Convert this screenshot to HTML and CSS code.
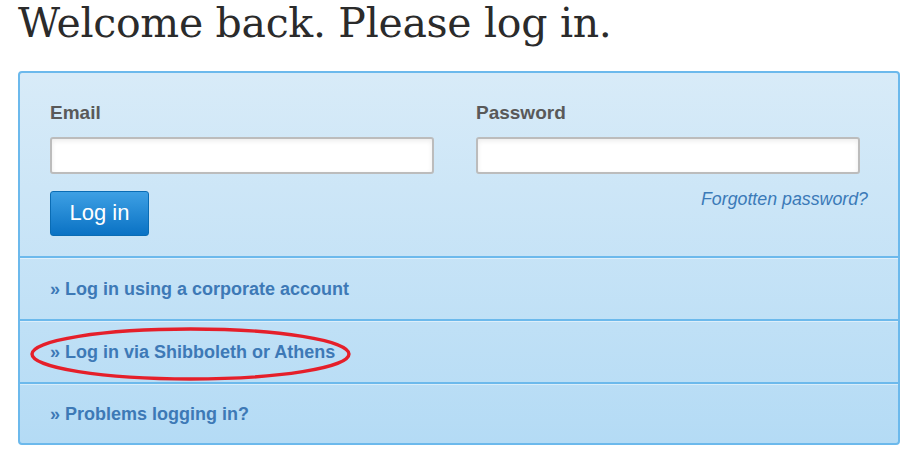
FILE: index.html
```html
<!DOCTYPE html>
<html>
<head>
<meta charset="utf-8">
<link rel="stylesheet" href="styles.css">
</head>
<body>
<div class="page">
  <h1 class="title">Welcome back. Please log in.</h1>
  <div class="panel">
    <form class="login">
      <div class="field">
        <label class="label">Email</label>
        <input class="input" type="text">
        <div class="actions">
          <button class="btn" type="button">Log in</button>
        </div>
      </div>
      <div class="field">
        <label class="label">Password</label>
        <input class="input" type="password">
        <div class="forgot-wrap"><a class="forgot" href="#">Forgotten password?</a></div>
      </div>
    </form>
    <div class="row"><a class="link" href="#">» Log in using a corporate account</a></div>
    <div class="row">
      <span class="circled"><a class="link" href="#">» Log in via Shibboleth or Athens</a>
        <svg class="ellipse" viewBox="0 0 322 54" preserveAspectRatio="none"><ellipse cx="161" cy="27" rx="159" ry="25" fill="none" stroke="#e51f2a" stroke-width="3.4"/></svg>
      </span>
    </div>
    <div class="row"><a class="link" href="#">» Problems logging in?</a></div>
  </div>
</div>
</body>
</html>
```

FILE: styles.css
```css
html, body {
  margin: 0;
  padding: 0;
  background: #fff;
}
.page {
  padding: 0 15px 0 18px;
}
.title {
  margin: 0;
  padding-top: 0;
  font-family: "DejaVu Serif", Georgia, serif;
  font-weight: normal;
  font-size: 41px;
  line-height: 46px;
  color: #2b2b2b;
  letter-spacing: -0.3px;
}
.panel {
  margin-top: 25px;
  width: 878px;
  border: 2px solid #6cb9ec;
  border-radius: 4px;
  background: linear-gradient(#d8ebf8, #b4dbf5);
  font-family: "Liberation Sans", Arial, sans-serif;
}
.login {
  display: grid;
  grid-template-columns: 384px 384px;
  column-gap: 42px;
  padding: 28px 38px 20px 30px;
  border-bottom: 2px solid #6cb9ec;
}
.field {
  display: flex;
  flex-direction: column;
}
.label {
  font-size: 19px;
  font-weight: bold;
  color: #595959;
  line-height: 24px;
  height: 24px;
}
.input {
  box-sizing: border-box;
  margin: 12px 0 0;
  height: 37px;
  width: 384px;
  border: 2px solid #bcbcbc;
  border-radius: 3px;
  background: #fff;
  box-shadow: inset 0 2px 5px rgba(0,0,0,0.08);
}
.actions {
  margin-top: 17px;
}
.btn {
  box-sizing: border-box;
  width: 99px;
  height: 45px;
  border: 1px solid #0a6cb4;
  border-radius: 3px;
  background: linear-gradient(#3ea0e4, #0a72c4);
  color: #fff;
  font-family: "Liberation Sans", Arial, sans-serif;
  font-size: 22px;
  line-height: 1;
  padding: 0 0 2px;
  cursor: pointer;
}
.forgot-wrap {
  margin-top: 15px;
  margin-right: -8px;
  text-align: right;
}
.forgot {
  font-size: 17.8px;
  font-style: italic;
  color: #3b7ab8;
  text-decoration: none;
}
.row {
  display: flex;
  align-items: center;
  height: 59px;
  padding: 2px 0 0 30px;
  border-bottom: 2px solid #6cb9ec;
  box-shadow: inset 0 1px 0 rgba(255,255,255,0.45);
}
.row:last-child {
  border-bottom: none;
  height: 57px;
}
.link {
  font-size: 18px;
  font-weight: bold;
  color: #3d79b6;
  text-decoration: none;
}
.circled {
  position: relative;
  display: inline-block;
}
.ellipse {
  position: absolute;
  left: -20px;
  top: -15px;
  width: 321px;
  height: 54px;
}
```
